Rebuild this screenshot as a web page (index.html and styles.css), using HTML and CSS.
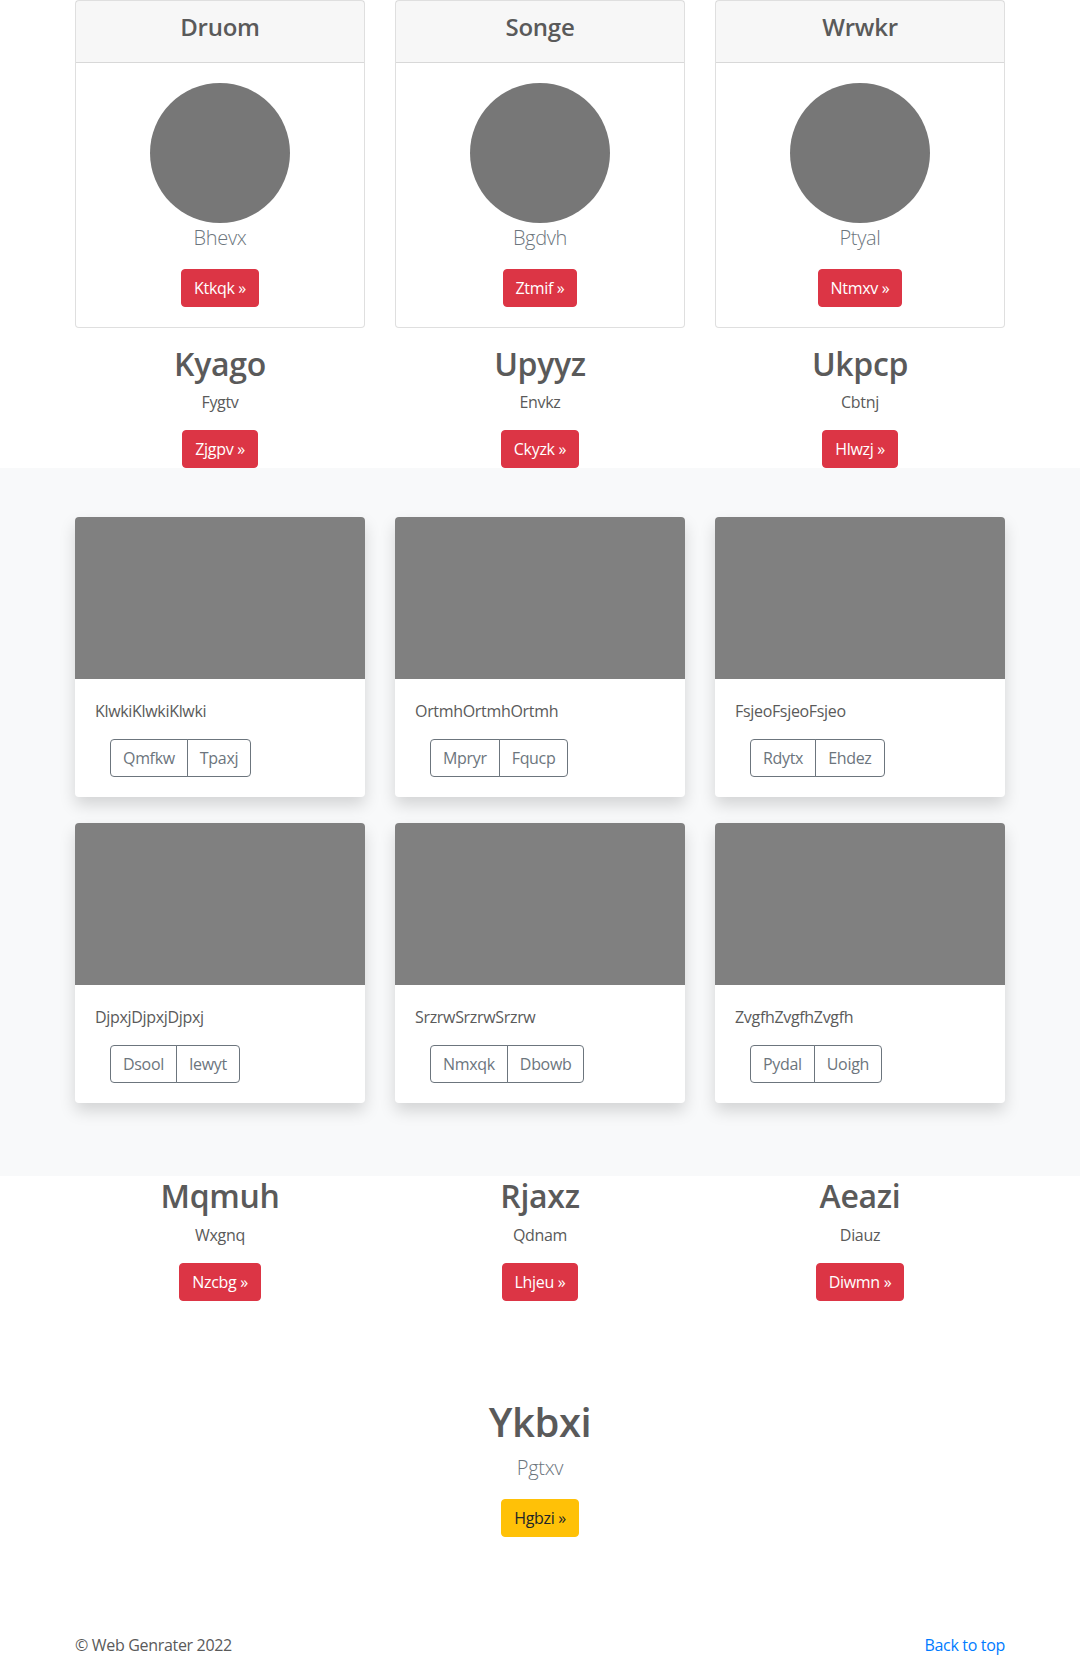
FILE: index.html
```html
<!DOCTYPE html>
<html lang="en">
<head>
<meta charset="utf-8">
<title>Web Genrater</title>
<link rel="stylesheet" href="styles.css">
</head>
<body>
<main>
  <div class="container">
    <div class="grid3 pricing">
      <div class="pcard">
        <div class="pcard-header"><h4>Druom</h4></div>
        <div class="pcard-body">
          <div class="circle"></div>
          <p class="lead">Bhevx</p>
          <a class="btn btn-danger" href="#">Ktkqk &raquo;</a>
        </div>
      </div>
      <div class="pcard">
        <div class="pcard-header"><h4>Songe</h4></div>
        <div class="pcard-body">
          <div class="circle"></div>
          <p class="lead">Bgdvh</p>
          <a class="btn btn-danger" href="#">Ztmif &raquo;</a>
        </div>
      </div>
      <div class="pcard">
        <div class="pcard-header"><h4>Wrwkr</h4></div>
        <div class="pcard-body">
          <div class="circle"></div>
          <p class="lead">Ptyal</p>
          <a class="btn btn-danger" href="#">Ntmxv &raquo;</a>
        </div>
      </div>
    </div>

    <div class="grid3 marketing">
      <div class="mcol">
        <h2>Kyago</h2>
        <p>Fygtv</p>
        <a class="btn btn-danger" href="#">Zjgpv &raquo;</a>
      </div>
      <div class="mcol">
        <h2>Upyyz</h2>
        <p>Envkz</p>
        <a class="btn btn-danger" href="#">Ckyzk &raquo;</a>
      </div>
      <div class="mcol">
        <h2>Ukpcp</h2>
        <p>Cbtnj</p>
        <a class="btn btn-danger" href="#">Hlwzj &raquo;</a>
      </div>
    </div>
  </div>

  <section class="album">
    <div class="container">
      <div class="grid3 album-grid">
        <div class="acard">
          <div class="thumb"></div>
          <div class="acard-body">
            <p class="card-text">KlwkiKlwkiKlwki</p>
            <div class="btn-group"><a class="btn btn-outline" href="#">Qmfkw</a><a class="btn btn-outline" href="#">Tpaxj</a></div>
          </div>
        </div>
        <div class="acard">
          <div class="thumb"></div>
          <div class="acard-body">
            <p class="card-text">OrtmhOrtmhOrtmh</p>
            <div class="btn-group"><a class="btn btn-outline" href="#">Mpryr</a><a class="btn btn-outline" href="#">Fqucp</a></div>
          </div>
        </div>
        <div class="acard">
          <div class="thumb"></div>
          <div class="acard-body">
            <p class="card-text">FsjeoFsjeoFsjeo</p>
            <div class="btn-group"><a class="btn btn-outline" href="#">Rdytx</a><a class="btn btn-outline" href="#">Ehdez</a></div>
          </div>
        </div>
        <div class="acard">
          <div class="thumb"></div>
          <div class="acard-body">
            <p class="card-text">DjpxjDjpxjDjpxj</p>
            <div class="btn-group"><a class="btn btn-outline" href="#">Dsool</a><a class="btn btn-outline" href="#">Iewyt</a></div>
          </div>
        </div>
        <div class="acard">
          <div class="thumb"></div>
          <div class="acard-body">
            <p class="card-text">SrzrwSrzrwSrzrw</p>
            <div class="btn-group"><a class="btn btn-outline" href="#">Nmxqk</a><a class="btn btn-outline" href="#">Dbowb</a></div>
          </div>
        </div>
        <div class="acard">
          <div class="thumb"></div>
          <div class="acard-body">
            <p class="card-text">ZvgfhZvgfhZvgfh</p>
            <div class="btn-group"><a class="btn btn-outline" href="#">Pydal</a><a class="btn btn-outline" href="#">Uoigh</a></div>
          </div>
        </div>
      </div>
    </div>
  </section>

  <div class="container">
    <div class="grid3 marketing">
      <div class="mcol">
        <h2>Mqmuh</h2>
        <p>Wxgnq</p>
        <a class="btn btn-danger" href="#">Nzcbg &raquo;</a>
      </div>
      <div class="mcol">
        <h2>Rjaxz</h2>
        <p>Qdnam</p>
        <a class="btn btn-danger" href="#">Lhjeu &raquo;</a>
      </div>
      <div class="mcol">
        <h2>Aeazi</h2>
        <p>Diauz</p>
        <a class="btn btn-danger" href="#">Diwmn &raquo;</a>
      </div>
    </div>
  </div>

  <section class="hero">
    <h1>Ykbxi</h1>
    <p class="lead">Pgtxv</p>
    <a class="btn btn-warning" href="#">Hgbzi &raquo;</a>
  </section>
</main>

<footer class="container footer">
  <p class="copy">&copy; Web Genrater 2022</p>
  <a class="top-link" href="#">Back to top</a>
</footer>
</body>
</html>
```

FILE: styles.css
```css
* { box-sizing: border-box; }

body {
  margin: 0;
  font-family: "Open Sans", "Noto Sans", "Liberation Sans", sans-serif;
  font-size: 16px;
  line-height: 1.5;
  letter-spacing: -0.02em;
  color: #5a5a5a;
  background: #fff;
}

h1, h2, h4 {
  font-weight: 600;
  line-height: 1.2;
  letter-spacing: -0.01em;
  margin: 0 0 8px;
  padding-top: 1px;
}

p { margin: 0 0 16px; }

a { text-decoration: none; }

.container {
  width: 960px;
  margin: 0 auto;
  padding: 0 15px;
}

.grid3 {
  display: grid;
  grid-template-columns: repeat(3, 290px);
  column-gap: 30px;
}

/* buttons */
.btn {
  display: inline-block;
  padding: 6px 12px;
  font-size: 16px;
  line-height: 24px;
  border: 1px solid transparent;
  border-radius: 4px;
  text-align: center;
  white-space: nowrap;
}
.btn-danger { background: #dc3545; border-color: #dc3545; color: #fff; }
.btn-warning { background: #ffc107; border-color: #ffc107; color: #212529; }
.btn-outline { background: transparent; border-color: #6c757d; color: #6c757d; }

.btn-group { display: inline-flex; margin-left: 15px; }
.btn-group .btn:first-child { border-radius: 4px 0 0 4px; }
.btn-group .btn + .btn { margin-left: -1px; border-radius: 0 4px 4px 0; }

/* pricing cards */
.pricing { margin-bottom: 16px; }

.pcard {
  border: 1px solid rgba(0,0,0,.125);
  border-radius: 4px;
  background: #fff;
  text-align: center;
}
.pcard-header {
  background: rgba(0,0,0,.03);
  border-bottom: 1px solid rgba(0,0,0,.125);
  padding: 11px 20px 12px;
}
.pcard-header h4 { font-size: 24px; }
.pcard-body { padding: 20px; }

.circle {
  width: 140px;
  height: 140px;
  border-radius: 50%;
  background: #777;
  margin: 0 auto;
}

.lead {
  font-size: 20px;
  font-weight: 300;
  line-height: 30px;
  color: #6c757d;
}

/* marketing */
.mcol { text-align: center; }
.mcol h2 { font-size: 32px; padding-top: 1px; margin-bottom: 7px; }
.mcol p { margin: 0 12px 16px; }
.mcol .btn { vertical-align: top; }

/* album */
.album {
  background: #f8f9fa;
  padding: 49px 0 73px;
}
.album-grid { row-gap: 26px; }

.acard {
  background: #fff;
  border-radius: 4px;
  box-shadow: 0 8px 16px rgba(0,0,0,.15);
  overflow: hidden;
}
.thumb {
  height: 162px;
  background: #808080;
}
.acard-body { padding: 20px; }
.card-text { margin-bottom: 16px; }
.acard-body .btn-group { vertical-align: top; }

/* hero */
.hero {
  text-align: center;
  padding: 96px 0 48px;
}
.hero h1 { font-size: 40px; padding-top: 1px; margin-bottom: 7px; }

/* footer */
.footer {
  display: flex;
  justify-content: space-between;
  padding-top: 48px;
  padding-bottom: 48px;
}
.footer p { margin: 0 0 16px; }
.top-link { color: #007bff; height: 24px; }
```
